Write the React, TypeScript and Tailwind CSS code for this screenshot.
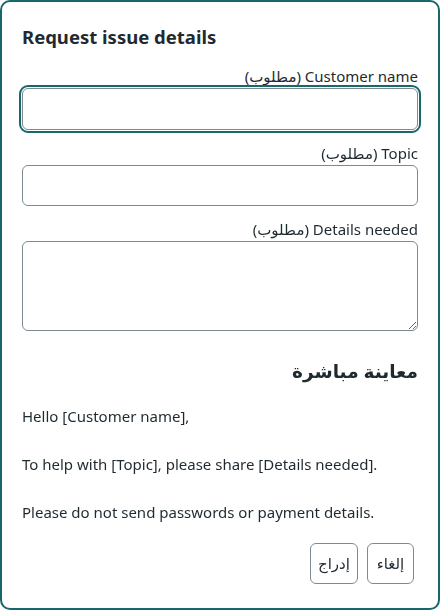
import React from "react"

const fieldClass =
  "mt-px w-full rounded-md border border-[#7d8b90] bg-white px-2 text-[15px] text-[#1f2a30]"

export default function App() {
  return (
    <div
      className="min-h-[610px] w-[440px] rounded-[10px] border-2 border-[#17676b] bg-white px-5 pt-[22px] pb-6 text-[#1f2a30]"
      style={{ fontFamily: '"Noto Sans", "DejaVu Sans", sans-serif' }}
    >
      <h2 className="mb-[15px] text-[18.5px] font-bold leading-[26px]">Request issue details</h2>

      {/* Customer name */}
      <label dir="rtl" className="block text-[15px] leading-[22px]">
        Customer name (مطلوب)
      </label>
      <input
        autoFocus
        className={fieldClass + " h-[42px] outline-2 outline-offset-1 outline-[#17676b]"}
      />

      <label dir="rtl" className="mt-[12px] block text-[15px] leading-[22px]">
        Topic (مطلوب)
      </label>
      <input className={fieldClass + " h-[41px] focus:outline-none"} />

      <label dir="rtl" className="mt-[12px] block text-[15px] leading-[22px]">
        Details needed (مطلوب)
      </label>
      <textarea className={fieldClass + " block h-[90px] py-1 focus:outline-none"} />

      {/* Preview */}
      <h3 dir="rtl" className="mt-[27px] text-[18.5px] font-bold leading-[26px]">
        معاينة مباشرة
      </h3>
      <div className="mt-[20px] whitespace-pre-wrap text-[15px] leading-[24px]">
        {"Hello [Customer name],\n\nTo help with [Topic], please share [Details needed].\n\nPlease do not send passwords or payment details."}
      </div>

      <div className="mt-[19px] mr-[4px] flex justify-end gap-[9px]">
        <button className="h-[41px] w-[48px] rounded-md border border-[#7d8b90] bg-white text-[15px]">
          إدراج
        </button>
        <button className="h-[41px] w-[47px] rounded-md border border-[#7d8b90] bg-white text-[15px]">
          إلغاء
        </button>
      </div>
    </div>
  )
}
